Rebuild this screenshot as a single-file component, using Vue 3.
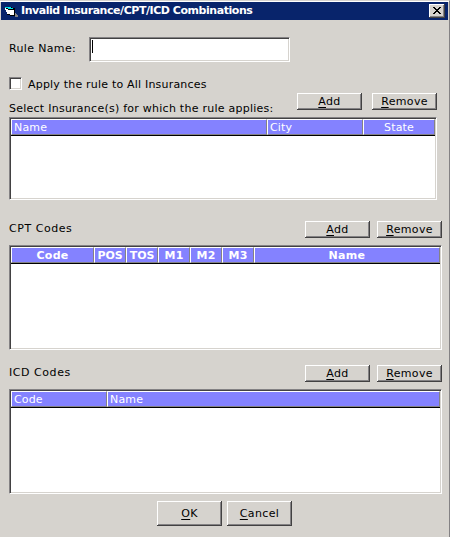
<script setup>
const sections = [
  {
    id: 'ins', label: 'Select Insurance(s) for which the rule applies:',
    cols: [{ t: 'Name' }, { t: 'City' }, { t: 'State', mid: true }],
  },
  {
    id: 'cpt', label: 'CPT Codes', bold: true,
    cols: [
      { t: 'Code', mid: true }, { t: 'POS', mid: true, tight: true }, { t: 'TOS', mid: true, tight: true },
      { t: 'M1', mid: true }, { t: 'M2', mid: true }, { t: 'M3', mid: true },
      { t: 'Name', mid: true },
    ],
  },
  {
    id: 'icd', label: 'ICD Codes',
    cols: [{ t: 'Code' }, { t: 'Name' }],
  },
]
</script>

<template>
  <div class="window">
    <header class="titlebar">
      <svg class="app-icon" width="14" height="12" viewBox="0 0 14 12" shape-rendering="crispEdges">
        <path fill="#848284" d="M10 7h1v1h1v1h1v2h-3z" />
        <path fill="#000" d="M0 1h7v1h3v8H5V9H2V6H1V4H0z" />
        <path fill="#fff" d="M1 3h2v1h6v5H5V8H3V6H2V5H1z" />
        <path fill="#00e0e8" d="M0 1h6v1h2v1H3V2H0z" />
        <path fill="#fff" d="M0 2h1v2H0zM1 4h1v2H1zM2 6h1v2H2z" />
        <path fill="#000" d="M3 3h6v1H3z" />
      </svg>
      <span class="title">Invalid Insurance/CPT/ICD Combinations</span>
      <button class="close" aria-label="Close">
        <svg width="8" height="7" viewBox="0 0 8 7" shape-rendering="crispEdges">
          <path d="M0 0h2v1h1v1h2V1h1V0h2v1H7v1H6v1H5v1h1v1h1v1h1v1H6V6H5V5H3v1H2v1H0V6h1V5h1V4h1V3H2V2H1V1H0z" />
        </svg>
      </button>
    </header>
    <main>
      <div class="rule">
        <span class="rule-label">Rule Name:</span>
        <div class="field"><i class="caret"></i></div>
      </div>
      <label class="check"><span class="box"></span><span class="check-label">Apply the rule to All Insurances</span></label>
      <section v-for="s in sections" :key="s.id" :class="s.id">
        <div class="bar">
          <span class="label">{{ s.label }}</span>
          <div class="actions">
            <button class="btn"><span><u>A</u>dd</span></button>
            <button class="btn"><span><u>R</u>emove</span></button>
          </div>
        </div>
        <div class="grid">
          <div class="head" :class="{ bold: s.bold }">
            <div v-for="(c, i) in s.cols" :key="i" class="cell" :class="{ mid: c.mid, tight: c.tight }">{{ c.t }}</div>
          </div>
        </div>
      </section>
      <footer>
        <button class="btn big"><span><u>O</u>K</span></button>
        <button class="btn big"><span><u>C</u>ancel</span></button>
      </footer>
    </main>
  </div>
</template>

<style>
body { margin: 0; background: #d6d3ce; }
</style>
<style scoped>
* { box-sizing: border-box; }
.window { width: 450px; height: 537px; background: #d6d3ce; border-top: 1px solid #d6d3ce; border-right: 1px solid #848284; box-shadow: inset 0 1px #fff; padding: 1px 1px 0 1px; font: 11px/14px "DejaVu Sans", Verdana, sans-serif; color: #000; white-space: nowrap; overflow: hidden; }
.titlebar { height: 18px; background: #08246b; display: flex; align-items: center; padding: 0 3px 0 4px; }
.app-icon { flex: none; margin-top: 1px; }
.title { color: #fff; font: bold 11px/14px "DejaVu Sans", Verdana, sans-serif; letter-spacing: -.45px; margin-left: 2px; flex: 1; }
button { font: inherit; color: inherit; padding: 0; border-radius: 0; }
.close { width: 16px; height: 14px; background: #d6d3ce; border: 0; box-shadow: inset -1px -1px #424142, inset 1px 1px #fff, inset -2px -2px #848284; display: flex; justify-content: center; padding-top: 3px; }
main { padding-left: 8px; }
.rule { display: flex; height: 25px; margin-top: 17px; }
.rule-label { width: 80px; padding-top: 5px; letter-spacing: .35px; }
.field, .grid, .box { background: #fff; border: 1px solid; border-color: #848284 #fff #fff #848284; box-shadow: inset 1px 1px #424142, inset -1px -1px #d6d3ce; }
.field { width: 201px; padding: 2px 0 0 2px; }
.caret { display: block; width: 1px; height: 13px; background: #000; }
.check { display: flex; height: 14px; margin-top: 15px; }
.box { width: 13px; height: 13px; }
.check-label { margin-left: 6px; letter-spacing: .2px; padding-top: 1px; }
.bar { display: flex; justify-content: space-between; }
.label { letter-spacing: .55px; padding-top: 1px; }
.actions { display: flex; gap: 7px; }
.btn { width: 65px; height: 17px; background: #d6d3ce; border: 0; box-shadow: inset -1px -1px #424142, inset 1px 1px #fff, inset -2px -2px #848284; display: flex; justify-content: center; letter-spacing: .35px; line-height: 18px; }
u { text-underline-offset: 2px; text-decoration-thickness: 1px; text-decoration-skip-ink: none; }
.ins { width: 428px; margin-top: 2px; }
.ins .bar { height: 24px; }
.ins .actions { gap: 10px; }
.ins .label { padding-top: 9px; letter-spacing: .25px; }
.ins .grid { height: 83px; }
.cpt, .icd { width: 433px; }
.cpt .bar { height: 24px; margin-top: 21px; }
.icd .bar { height: 24px; margin-top: 15px; }
.grid { padding: 1px; }
.cpt .grid, .icd .grid { height: 105px; }
.head { display: grid; height: 17px; border-bottom: 1px solid #000; color: #fff; letter-spacing: .15px; line-height: 15px; }
.ins .head { grid-template-columns: 256px 96px 1fr; }
.cpt .head { grid-template-columns: 83px 32px 32px 32px 32px 32px 1fr; letter-spacing: .3px; }
.icd .head { grid-template-columns: 96px 1fr; }
.cell { background: #8482ff; border: 1px solid; border-color: #fff #848284 #848284 #fff; padding-left: 2px; height: 16px; overflow: hidden; }
.mid { text-align: center; padding: 0; }
.tight { letter-spacing: -.1px; }
.bold { font-weight: bold; }
footer { display: flex; gap: 5px; padding-left: 148px; margin-top: 7px; }
.big { height: 25px; line-height: 25px; }
</style>
